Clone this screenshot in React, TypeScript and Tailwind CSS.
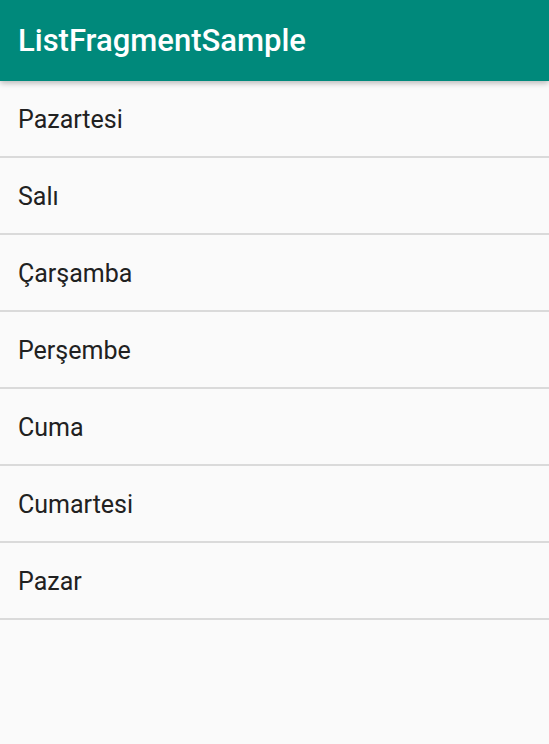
import React from "react";

const days = ["Pazartesi", "Salı", "Çarşamba", "Perşembe", "Cuma", "Cumartesi", "Pazar"];

export default function App() {
  return (
    <div
      className="w-[549px] h-[744px] bg-[#fafafa] overflow-hidden flex flex-col"
      style={{ fontFamily: "Roboto, 'Noto Sans', sans-serif" }}
    >
      <div className="relative z-10 h-[81px] shrink-0 bg-[#00897b] flex items-center px-[18px] shadow-[0_2px_6px_rgba(0,0,0,0.28)]">
        <span className="text-white text-[31px] font-medium leading-none">ListFragmentSample</span>
      </div>
      <ul className="flex flex-col">
        {days.map((d) => (
          <li
            key={d}
            className="h-[77px] border-b-2 border-[#dadada] flex items-center px-[18px] pt-[3px] text-[25px] text-[#212121]"
          >
            {d}
          </li>
        ))}
      </ul>
    </div>
  );
}
